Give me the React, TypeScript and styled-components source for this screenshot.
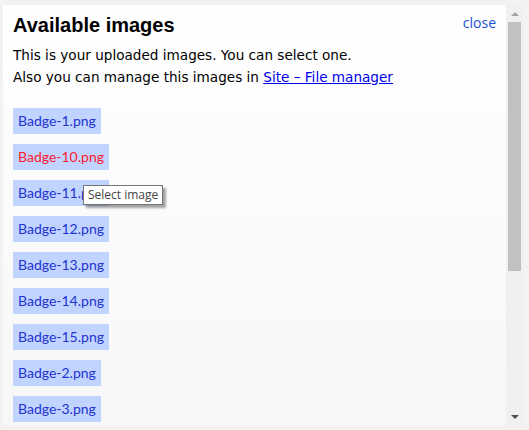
import React from "react";
import styled, { createGlobalStyle } from "styled-components";

const GlobalStyle = createGlobalStyle`
  html, body {
    margin: 0;
    padding: 0;
    background: #f2f2f2;
  }
`;

const images = [
  "Badge-1.png",
  "Badge-10.png",
  "Badge-11.png",
  "Badge-12.png",
  "Badge-13.png",
  "Badge-14.png",
  "Badge-15.png",
  "Badge-2.png",
  "Badge-3.png",
  "Badge-4.png",
];

const App: React.FC = () => {
  return (
    <>
      <GlobalStyle />
      <Frame>
        <Content>
          <Header>
            <Title>Available images</Title>
            <Close href="#">close</Close>
          </Header>
          <Intro>
            This is your uploaded images. You can select one.
            <br />
            Also you can manage this images in <Manager href="#">Site – File manager</Manager>
          </Intro>
          <List>
            {images.map((name) => (
              <Item key={name} $active={name === "Badge-10.png"}>
                {name}
              </Item>
            ))}
          </List>
          <Tooltip>Select image</Tooltip>
        </Content>
        <ScrollBar>
          <ArrowButton>
            <Arrow $up $color="#a3a3a3" />
          </ArrowButton>
          <Track>
            <Thumb />
          </Track>
          <ArrowButton>
            <Arrow $color="#505050" />
          </ArrowButton>
        </ScrollBar>
      </Frame>
    </>
  );
};

const Frame = styled.div`
  display: flex;
  width: 520px;
  height: 420px;
  margin: 5px 0 0 3px;
`;

const Content = styled.div`
  position: relative;
  flex: 1;
  overflow: hidden;
  padding: 8px 10px 0 10px;
  background: linear-gradient(#ffffff, #f7f7f7);
  font-family: "DejaVu Sans", Verdana, sans-serif;
`;

const Header = styled.div`
  display: flex;
  justify-content: space-between;
  align-items: flex-start;
`;

const Title = styled.h2`
  margin: 0;
  font-family: "Liberation Sans", Arial, sans-serif;
  font-size: 20px;
  line-height: 24px;
  font-weight: bold;
  color: #000;
`;

const Close = styled.a`
  font-family: "Open Sans", "Noto Sans", sans-serif;
  font-size: 14px;
  line-height: 20px;
  color: #1a4fd6;
  text-decoration: none;
`;

const Intro = styled.p`
  margin: 7px 0 0 0;
  font-size: 13.6px;
  line-height: 22px;
  color: #000;
`;

const Manager = styled.a`
  color: #0000ee;
`;

const List = styled.div`
  display: flex;
  flex-direction: column;
  align-items: flex-start;
  gap: 10px;
  margin-top: 20px;
`;

const Item = styled.div<{ $active?: boolean }>`
  padding: 0 5px;
  height: 26px;
  line-height: 26px;
  background: #c0d4ff;
  font-family: Lato, "Open Sans", sans-serif;
  font-size: 14px;
  color: ${(p) => (p.$active ? "#ff1a2e" : "#1f33d0")};
  cursor: pointer;
`;

const Tooltip = styled.div`
  position: absolute;
  left: 80px;
  top: 180px;
  padding: 1px 4px 1px;
  background: #fff;
  border: 1px solid #767676;
  box-shadow: 3px 3px 2px rgba(0, 0, 0, 0.35);
  font-family: "Open Sans", "Noto Sans", sans-serif;
  font-size: 12px;
  line-height: 16px;
  color: #444;
  white-space: nowrap;
`;

const ScrollBar = styled.div`
  display: flex;
  flex-direction: column;
  width: 17px;
  background: #f0f0f0;
`;

const ArrowButton = styled.div`
  display: flex;
  align-items: center;
  justify-content: center;
  height: 17px;
`;

const Arrow = styled.div<{ $up?: boolean; $color: string }>`
  width: 0;
  height: 0;
  border-left: 4px solid transparent;
  border-right: 4px solid transparent;
  ${(p) =>
    p.$up
      ? `border-bottom: 4px solid ${p.$color};`
      : `border-top: 4px solid ${p.$color};`}
`;

const Track = styled.div`
  flex: 1;
  padding: 0 2px;
`;

const Thumb = styled.div`
  height: 249px;
  background: #c1c1c1;
`;

export default App;
